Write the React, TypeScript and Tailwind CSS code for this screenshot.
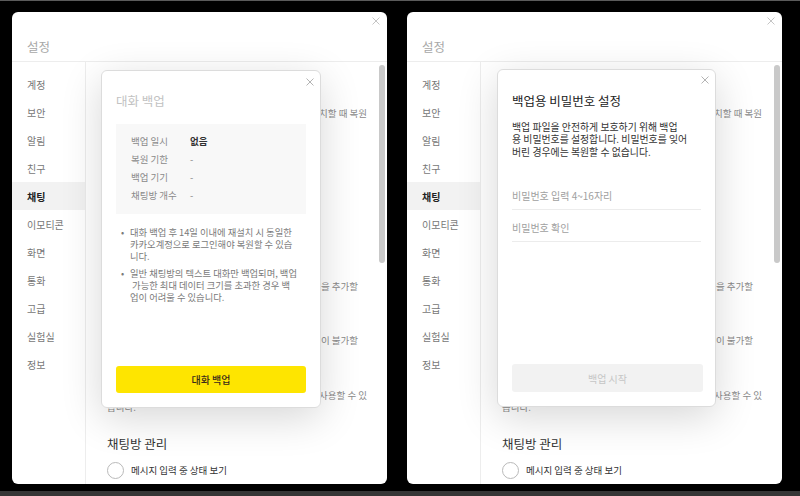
import React from "react";

const font = "font-['Noto_Sans_CJK_KR','Noto_Sans',sans-serif]";

const menu = ["계정", "보안", "알림", "친구", "채팅", "이모티콘", "화면", "통화", "고급", "실험실", "정보"];

function CloseIcon({ size = 8, color = "#b0b0b0" }: { size?: number; color?: string }) {
  return (
    <svg width={size} height={size} viewBox="0 0 10 10" fill="none">
      <path d="M1 1L9 9M9 1L1 9" stroke={color} strokeWidth="1.2" strokeLinecap="round" />
    </svg>
  );
}

// the end of a settings line, the rest sits behind the modal
function Fragment({ text, className }: { text: string; className: string }) {
  return (
    <div className={`flex h-[12px] items-center justify-end whitespace-nowrap text-[9.5px] leading-[12px] text-[#8a8a8a] ${className}`}>
      {text}
    </div>
  );
}

function SettingsWindow({ children }: { children: React.ReactNode }) {
  return (
    <div className="relative flex h-[472px] w-[375px] flex-col overflow-hidden rounded-[6px] bg-white">
      {/* header */}
      <div className="flex h-[50px] items-end border-b border-[#ededed] pb-[5px] pl-[15px]">
        <span className="text-[12.5px] leading-[18px] text-[#a8a8a8]">설정</span>
      </div>
      <div className="absolute right-[7px] top-[5px]">
        <CloseIcon size={8} color="#c2c2c2" />
      </div>

      <div className="flex min-h-0 flex-1">
        {/* sidebar */}
        <div className="w-[74px] shrink-0 border-r border-[#ededed] pt-[8px]">
          {menu.map((m) => (
            <div
              key={m}
              className={`flex h-[28px] items-center pl-[15px] text-[10px] ${
                m === "채팅" ? "bg-[#f2f2f2] font-bold text-[#222]" : "text-[#777]"
              }`}
            >
              {m}
            </div>
          ))}
        </div>

        {/* page content behind the modal */}
        <div className="flex min-w-0 flex-1">
          <div className="min-w-0 flex-1 pl-[21px] pr-[10px]">
            <div className="h-[45px]" />
            <Fragment className="" text="재설치할 때 복원" />
            <div className="h-[161px]" />
            <Fragment className="mr-[9px]" text="채팅방을 추가할" />
            <div className="h-[42px]" />
            <Fragment className="mr-[9px]" text="입장이 불가할" />
            <div className="h-[43px]" />
            <Fragment className="" text="언제든 사용할 수 있" />
            <div className="h-[12px] text-[9.5px] leading-[12px] text-[#8a8a8a]">습니다.</div>
            <div className="mt-[22px] text-[12.5px] leading-[18px] text-[#333]">채팅방 관리</div>
            <div className="mt-[9px] flex items-center gap-[7px]">
              <div className="h-[17px] w-[17px] shrink-0 rounded-full border border-[#b9b9b9]" />
              <span className="text-[9.5px] text-[#333]">메시지 입력 중 상태 보기</span>
            </div>
          </div>
          <div className="w-[10px] shrink-0 pl-[2px] pt-[3px]">
            <div className="h-[198px] w-[6px] rounded-full bg-[#c9c9c9]" />
          </div>
        </div>
      </div>

      {children}
    </div>
  );
}

function BackupModal() {
  const rows = [
    ["백업 일시", "없음"],
    ["복원 기한", "-"],
    ["백업 기기", "-"],
    ["채팅방 개수", "-"],
  ];
  return (
    <div className="absolute left-[89px] top-[58px] flex h-[338px] w-[220px] flex-col rounded-[6px] border border-[#dcdcdc] bg-white px-[14px] pb-[14px] pt-[21px] shadow-[0_10px_40px_rgba(0,0,0,0.16)]">
      <div className="absolute right-[6px] top-[7px]">
        <CloseIcon size={8} />
      </div>
      <div className="text-[12.5px] leading-[18px] text-[#c2c2c2]">대화 백업</div>

      <div className="mt-[14px] h-[90px] bg-[#f8f8f8] pl-[15px] pt-[8px]">
        {rows.map(([k, v]) => (
          <div key={k} className="flex h-[18px] items-center text-[9.5px]">
            <span className="w-[59px] text-[#8a8a8a]">{k}</span>
            <span className={v === "없음" ? "font-semibold text-[#333]" : "text-[#888]"}>{v}</span>
          </div>
        ))}
      </div>

      <div className="mt-[12px] flex flex-col gap-[5px] text-[9.3px] leading-[12px] text-[#7a7a7a]">
        <div className="flex">
          <span className="w-[14px] pl-[5px]">•</span>
          <div className="whitespace-nowrap">
            <div>대화 백업 후 14일 이내에 재설치 시 동일한</div>
            <div>카카오계정으로 로그인해야 복원할 수 있습</div>
            <div>니다.</div>
          </div>
        </div>
        <div className="flex">
          <span className="w-[14px] pl-[5px]">•</span>
          <div className="whitespace-nowrap">
            <div>일반 채팅방의 텍스트 대화만 백업되며, 백업</div>
            <div>&nbsp;가능한 최대 데이터 크기를 초과한 경우 백</div>
            <div>업이 어려울 수 있습니다.</div>
          </div>
        </div>
      </div>

      <button className="mt-auto h-[27px] w-[190px] rounded-[3px] bg-[#fee500] text-[10px] font-medium text-[#3a2a1a]">
        대화 백업
      </button>
    </div>
  );
}

function PasswordModal() {
  return (
    <div className="absolute left-[90px] top-[57px] flex h-[338px] w-[219px] flex-col rounded-[6px] border border-[#dcdcdc] bg-white px-[14px] pb-[14px] pt-[22px] shadow-[0_10px_40px_rgba(0,0,0,0.16)]">
      <div className="absolute right-[6px] top-[6px]">
        <CloseIcon size={8} />
      </div>
      <div className="text-[12.5px] leading-[18px] text-[#222]">백업용 비밀번호 설정</div>
      <div className="mt-[11px] whitespace-nowrap text-[9.9px] leading-[12.3px] text-[#333]">
        <div>백업 파일을 안전하게 보호하기 위해 백업</div>
        <div>용 비밀번호를 설정합니다. 비밀번호를 잊어</div>
        <div>버린 경우에는 복원할 수 없습니다.</div>
      </div>

      <div className="mt-[20px] flex flex-col">
        <div className="flex h-[32px] items-end border-b border-[#ececec] pb-[6px]">
          <input
            type="password"
            placeholder="비밀번호 입력 4~16자리"
            className="w-full bg-transparent text-[10px] leading-[14px] outline-none placeholder:text-[#a0a0a0]"
          />
        </div>
        <div className="flex h-[32px] items-end border-b border-[#ececec] pb-[6px]">
          <input
            type="password"
            placeholder="비밀번호 확인"
            className="w-full bg-transparent text-[10px] leading-[14px] outline-none placeholder:text-[#a0a0a0]"
          />
        </div>
      </div>

      <button className="mt-auto h-[28px] w-[191px] rounded-[3px] bg-[#f2f2f2] text-[10px] text-[#c6c6c6]">
        백업 시작
      </button>
    </div>
  );
}

export default function App() {
  return (
    <div className={`${font} flex h-[496px] w-[800px] gap-[20px] overflow-hidden border-b-[5px] border-t border-b-[#363636] border-t-[#5a5a5a] bg-black pl-[12px] pt-[11px]`}>
      <SettingsWindow>
        <BackupModal />
      </SettingsWindow>
      <SettingsWindow>
        <PasswordModal />
      </SettingsWindow>
    </div>
  );
}
